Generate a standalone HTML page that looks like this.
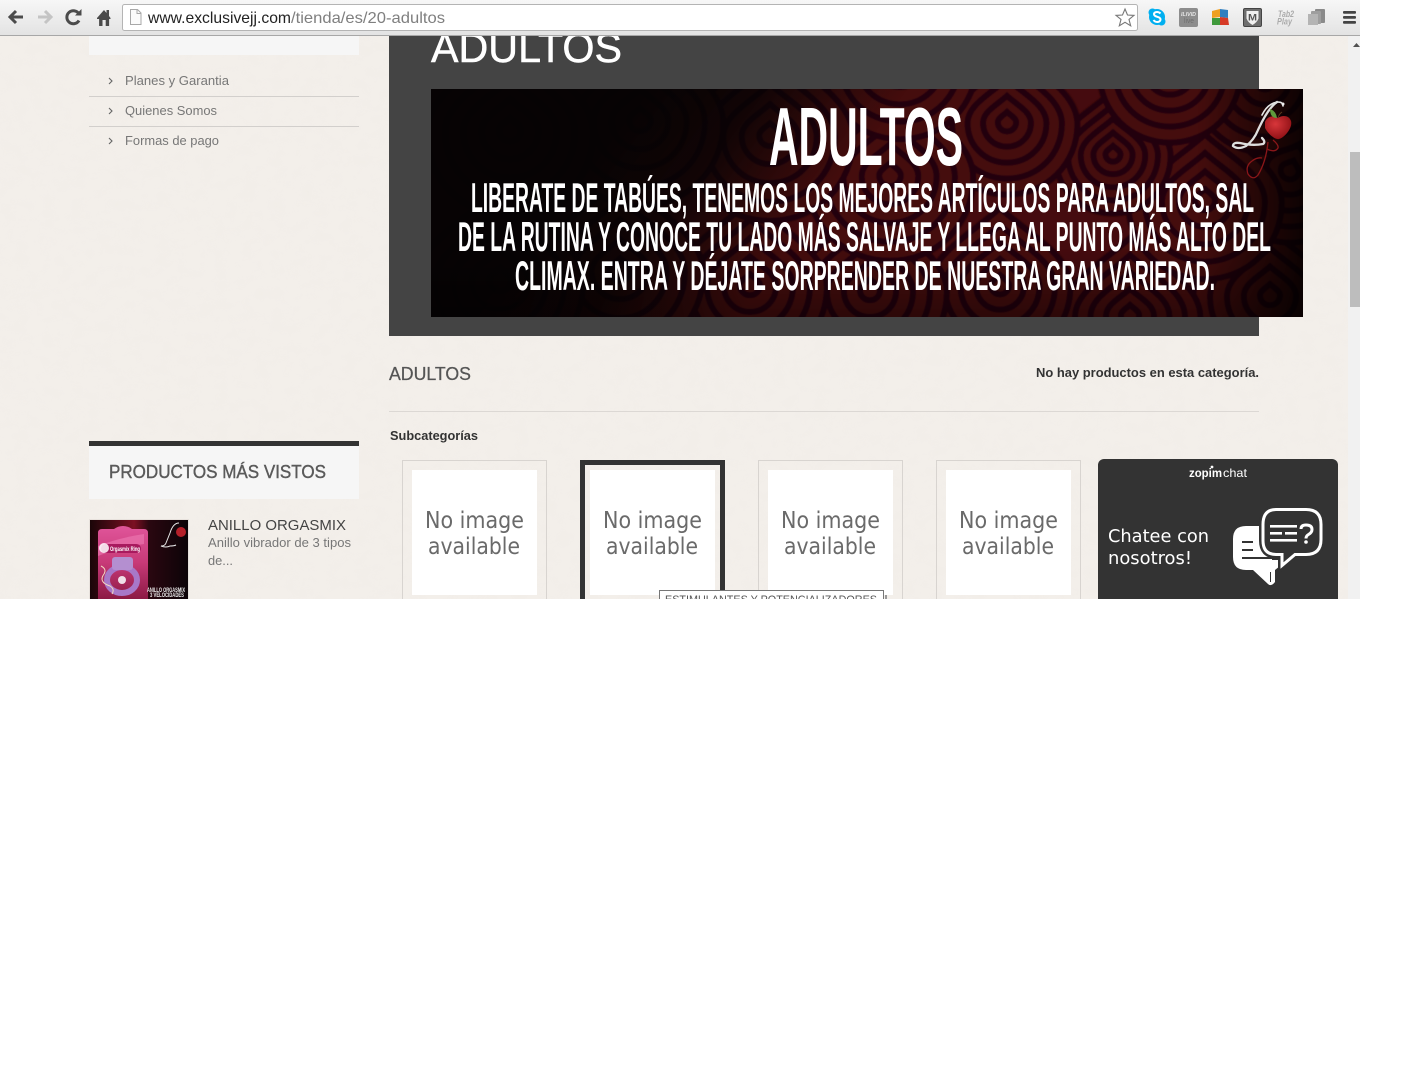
<!DOCTYPE html>
<html lang="es">
<head>
<meta charset="utf-8">
<title>Adultos</title>
<style>
html,body{margin:0;padding:0;background:#fff;width:1418px;height:1080px;overflow:hidden}
svg{display:block;position:absolute;left:0;top:0}
text{font-family:"Liberation Sans",Arial,sans-serif;white-space:pre}
.b{font-weight:bold;fill:#fff;font-family:"Liberation Sans Narrow","Liberation Sans",sans-serif}
.d{font-family:"DejaVu Sans",sans-serif}
</style>
</head>
<body>
<svg width="1418" height="1080" viewBox="0 0 1418 1080" xmlns="http://www.w3.org/2000/svg">
<defs>
<linearGradient id="tb" x1="0" y1="0" x2="0" y2="1"><stop offset="0" stop-color="#f7f7f7"/><stop offset="1" stop-color="#e3e3e3"/></linearGradient>
<filter id="paper" x="0" y="0" width="100%" height="100%"><feTurbulence type="fractalNoise" baseFrequency=".07 .09" numOctaves="3" seed="4"/><feColorMatrix values="0 0 0 0 .55 0 0 0 0 .5 0 0 0 0 .44 .5 0 0 0 -.2"/></filter>
<filter id="soft" x="-5%" y="-5%" width="110%" height="110%"><feGaussianBlur stdDeviation=".7"/></filter>
<linearGradient id="dk" gradientUnits="userSpaceOnUse" x1="590" y1="160" x2="760" y2="287"><stop offset="0" stop-color="#050304" stop-opacity=".97"/><stop offset=".45" stop-color="#050304" stop-opacity=".8"/><stop offset="1" stop-color="#050304" stop-opacity="0"/></linearGradient>
<linearGradient id="rt" x1="0" y1="0" x2="1" y2="0"><stop offset=".88" stop-color="#000" stop-opacity="0"/><stop offset="1" stop-color="#000" stop-opacity=".8"/></linearGradient>
<linearGradient id="bt" x1="0" y1="0" x2="0" y2="1"><stop offset=".7" stop-color="#000" stop-opacity="0"/><stop offset="1" stop-color="#000" stop-opacity=".35"/></linearGradient>
<clipPath id="bc"><rect x="431" y="89" width="872" height="228"/></clipPath>
<clipPath id="pc"><rect x="90" y="520" width="98" height="79"/></clipPath>
<radialGradient id="ap" cx=".4" cy=".35" r=".7"><stop offset="0" stop-color="#d8363a"/><stop offset="1" stop-color="#8c0f14"/></radialGradient>
<linearGradient id="pk" x1="0" y1="0" x2="0" y2="1"><stop offset="0" stop-color="#e0559a"/><stop offset=".5" stop-color="#c83a78"/><stop offset="1" stop-color="#8c1a44"/></linearGradient>
<linearGradient id="pr" x1="0" y1="0" x2="1" y2="0"><stop offset="0" stop-color="#1a0508"/><stop offset=".45" stop-color="#7c1023"/><stop offset=".6" stop-color="#2a0710"/><stop offset="1" stop-color="#0c0408"/></linearGradient>
<path id="td" vector-effect="non-scaling-stroke" d="M0-70C26-46 64-28 64 2 64 38 36 66 0 66-36 66-64 38-64 2-64-28-26-46 0-70Z"/>
<g id="sw" stroke="#230508" stroke-width="6" fill="none">
<use href="#td" fill="#450b0f"/>
<use href="#td" transform="scale(.78)"/>
<use href="#td" transform="scale(.56)"/>
<use href="#td" transform="scale(.34)"/>
<use href="#td" transform="scale(.13)"/>
</g>
</defs>

<!-- page background -->
<rect x="0" y="0" width="1348" height="599" fill="#f3efea"/>
<rect x="0" y="0" width="1348" height="599" filter="url(#paper)" opacity=".1"/>

<!-- left sidebar -->
<rect x="89" y="36" width="270" height="19" fill="#f6f6f6"/>
<g fill="none" stroke="#666" stroke-width="1.1"><path d="M109 78l3 3-3 3"/><path d="M109 108l3 3-3 3"/><path d="M109 138l3 3-3 3"/></g>
<text x="125" y="85" font-size="13" fill="#777" textLength="104" lengthAdjust="spacingAndGlyphs">Planes y Garantia</text>
<text x="125" y="115" font-size="13" fill="#777" textLength="92" lengthAdjust="spacingAndGlyphs">Quienes Somos</text>
<text x="125" y="145" font-size="13" fill="#777" textLength="94" lengthAdjust="spacingAndGlyphs">Formas de pago</text>
<rect x="89" y="96" width="270" height="1" fill="#d2cfcc"/>
<rect x="89" y="126" width="270" height="1" fill="#d2cfcc"/>

<rect x="89" y="441" width="270" height="5" fill="#333"/>
<rect x="89" y="446" width="270" height="53" fill="#f6f6f6"/>
<text x="109" y="478" font-size="18" fill="#5a5a5a" stroke="#5a5a5a" stroke-width=".4" textLength="217" lengthAdjust="spacingAndGlyphs">PRODUCTOS MÁS VISTOS</text>

<!-- product thumbnail -->
<rect x="89" y="519" width="100" height="80" fill="#e7e1dc"/>
<g clip-path="url(#pc)">
<rect x="90" y="520" width="98" height="79" fill="url(#pr)"/>
<path d="M98 533q0-4 4-4h12q4-3 9-3t9 3h12q4 0 4 4v66H98Z" fill="url(#pk)"/>
<path d="M98 546q20-8 46-12v10q-24 3-46 12Z" fill="#ee7cb4" opacity=".6"/>
<rect x="101" y="544" width="40" height="9" rx="4.500" fill="#a81a5e"/>
<circle cx="104" cy="548" r="5" fill="#fff" opacity=".85"/>
<text x="110" y="551" font-size="6" font-weight="bold" fill="#fff" textLength="30" lengthAdjust="spacingAndGlyphs">Orgasmix Ring</text>
<ellipse cx="122" cy="580" rx="15" ry="13" fill="none" stroke="#a878c8" stroke-width="6"/>
<rect x="112" y="557" width="21" height="13" rx="3" fill="#b48fd0"/>
<circle cx="122" cy="580" r="4" fill="#f0e0e8"/>
<path d="M101 566q6 3 3 8-6 8 6 12 5 3 2 8" fill="none" stroke="#f3d9c0" stroke-width="1"/>
<text x="147" y="592" font-size="6" font-weight="bold" fill="#eee" textLength="38" lengthAdjust="spacingAndGlyphs">ANILLO ORGASMIX</text>
<text x="150" y="597" font-size="6" font-weight="bold" fill="#eee" textLength="34" lengthAdjust="spacingAndGlyphs">3 VELOCIDADES</text>
<path d="M179 523q-6 0-9 10l-4 10q-1 3-5 3 5 2 9 0 4 0 6-1" fill="none" stroke="#e8e8e8" stroke-width="1"/>
<circle cx="181" cy="532" r="5" fill="#b5202a"/>
</g>
<text x="208" y="530" font-size="15" fill="#444" textLength="138" lengthAdjust="spacingAndGlyphs">ANILLO ORGASMIX</text>
<text x="208" y="547" font-size="13" fill="#777" textLength="143" lengthAdjust="spacingAndGlyphs">Anillo vibrador de 3 tipos</text>
<text x="208" y="565" font-size="13" fill="#777" textLength="25" lengthAdjust="spacingAndGlyphs">de...</text>

<!-- dark panel -->
<rect x="389" y="30" width="870" height="306" fill="#444"/>
<text x="431" y="62" font-size="42" fill="#fff" stroke="#fff" stroke-width=".5" textLength="191" lengthAdjust="spacingAndGlyphs">ADULTOS</text>

<!-- banner -->
<g clip-path="url(#bc)">
<rect x="431" y="89" width="872" height="228" fill="#450b0f"/>
<g filter="url(#soft)">
<use href="#sw" transform="translate(1270 295) scale(1.2)"/>
<use href="#sw" transform="translate(1130 315) scale(1.1)"/>
<use href="#sw" transform="translate(1000 285) scale(1.1)"/>
<use href="#sw" transform="translate(870 290) scale(1.2)"/>
<use href="#sw" transform="translate(750 285) scale(1.2)"/>
<use href="#sw" transform="translate(620 270) scale(1.3)"/>
<use href="#sw" transform="translate(500 280) scale(1.3)"/>
<use href="#sw" transform="translate(1290 170) scale(1.1) rotate(20)"/>
<use href="#sw" transform="translate(1205 200) scale(1.2)"/>
<use href="#sw" transform="translate(1113 154) scale(.9)"/>
<use href="#sw" transform="translate(1265 80) scale(1.1)"/>
<use href="#sw" transform="translate(1170 70) scale(1.1)"/>
<use href="#sw" transform="translate(1007 122) scale(1.1)"/>
<use href="#sw" transform="translate(890 175) scale(1.3)"/>
<use href="#sw" transform="translate(900 60) scale(1.2)"/>
<use href="#sw" transform="translate(770 135) scale(1.3)"/>
<use href="#sw" transform="translate(640 120) scale(1.3)"/>
<use href="#sw" transform="translate(510 130) scale(1.3)"/>
</g>
<rect x="431" y="89" width="872" height="228" fill="url(#dk)"/>
<rect x="431" y="89" width="872" height="228" fill="url(#rt)"/>
<rect x="431" y="89" width="872" height="228" fill="url(#bt)"/>
<!-- logo -->
<path d="M1273 140q6 5 5 8-3 5-11 1" fill="none" stroke="#8a1619" stroke-width="1.300"/>
<path d="M1268 142q-2 20-10 33-5 6-10-1-3-8 4-13 5-4 10-3" fill="none" stroke="#8a1619" stroke-width="1.300"/>
<path d="M1262 115Q1268 103 1278 102q5 0 5 4" fill="none" stroke="#e6e6e6" stroke-width="1.600" stroke-linecap="round"/>
<path d="M1277 102Q1268 108 1258 130q-4 10-12 16-8 4-13 0 0-4 7-3 12 3 23 1 3-2-1-6" fill="none" stroke="#dedede" stroke-width="2.300" stroke-linecap="round"/>
<circle cx="1283" cy="104" r="1.500" fill="#eee"/>
<path d="M1265 122C1267 116 1274 115 1278 118 1282 115 1289 115 1291 121 1293 128 1284 138 1279 139 1275 140 1268 134 1265 128Z" fill="url(#ap)"/>
<path d="M1270 109q6 2 7 9-7 0-7-9Z" fill="#5f9a3c"/>
<path d="M1278 118q1-4 4-6" stroke="#5c3a20" stroke-width="1" fill="none"/>
<!-- banner text -->
<text class="b" x="769" y="165" font-size="83" textLength="194" lengthAdjust="spacingAndGlyphs">ADULTOS</text>
<text class="b" x="471" y="212" font-size="42" textLength="783" lengthAdjust="spacingAndGlyphs">LIBERATE DE TABÚES, TENEMOS LOS MEJORES ARTÍCULOS PARA ADULTOS, SAL</text>
<text class="b" x="458" y="251" font-size="42" textLength="813" lengthAdjust="spacingAndGlyphs">DE LA RUTINA Y CONOCE TU LADO MÁS SALVAJE Y LLEGA AL PUNTO MÁS ALTO DEL</text>
<text class="b" x="515" y="290" font-size="42" textLength="700" lengthAdjust="spacingAndGlyphs">CLIMAX. ENTRA Y DÉJATE SORPRENDER DE NUESTRA GRAN VARIEDAD.</text>
</g>

<!-- headings -->
<text x="389" y="380" font-size="18" fill="#555" stroke="#555" stroke-width=".25" textLength="82" lengthAdjust="spacingAndGlyphs">ADULTOS</text>
<text x="1036" y="377" font-size="13" font-weight="bold" fill="#333" textLength="223" lengthAdjust="spacingAndGlyphs">No hay productos en esta categoría.</text>
<rect x="389" y="411" width="870" height="1" fill="#dcd8d4"/>
<text x="390" y="440" font-size="13" font-weight="bold" fill="#333" textLength="88" lengthAdjust="spacingAndGlyphs">Subcategorías</text>

<!-- cards -->
<g fill="none" stroke="#d8d4d0">
<rect x="402.500" y="460.500" width="144" height="150"/>
<rect x="758.500" y="460.500" width="144" height="150"/>
<rect x="936.500" y="460.500" width="144" height="150"/>
</g>
<rect x="582.500" y="462.500" width="140" height="150" fill="none" stroke="#333" stroke-width="5"/>
<g fill="#fff">
<rect x="412" y="470" width="125" height="125"/>
<rect x="590" y="470" width="125" height="125"/>
<rect x="768" y="470" width="125" height="125"/>
<rect x="946" y="470" width="125" height="125"/>
</g>
<g font-size="23" fill="#6a6a6a" class="d">
<text class="d" x="425" y="528" textLength="99" lengthAdjust="spacingAndGlyphs">No image</text>
<text class="d" x="428" y="554" textLength="92" lengthAdjust="spacingAndGlyphs">available</text>
<text class="d" x="603" y="528" textLength="99" lengthAdjust="spacingAndGlyphs">No image</text>
<text class="d" x="606" y="554" textLength="92" lengthAdjust="spacingAndGlyphs">available</text>
<text class="d" x="781" y="528" textLength="99" lengthAdjust="spacingAndGlyphs">No image</text>
<text class="d" x="784" y="554" textLength="92" lengthAdjust="spacingAndGlyphs">available</text>
<text class="d" x="959" y="528" textLength="99" lengthAdjust="spacingAndGlyphs">No image</text>
<text class="d" x="962" y="554" textLength="92" lengthAdjust="spacingAndGlyphs">available</text>
</g>

<!-- tooltip -->
<rect x="885" y="595" width="2" height="4" fill="#999"/>
<rect x="659.500" y="590.500" width="224" height="20" fill="#fff" stroke="#767676"/>
<text x="665" y="603" font-size="11" fill="#555" textLength="212" lengthAdjust="spacingAndGlyphs">ESTIMULANTES Y POTENCIALIZADORES</text>

<!-- chat widget -->
<rect x="1098" y="459" width="240" height="160" rx="6" fill="#333"/>
<text x="1189" y="477" font-size="12" font-weight="bold" fill="#fff" textLength="33" lengthAdjust="spacingAndGlyphs">zopim</text>
<text x="1223" y="477" font-size="12" fill="#fff" textLength="24" lengthAdjust="spacingAndGlyphs">chat</text>
<circle cx="1212" cy="467" r="1.400" fill="#fff"/>
<text class="d" x="1108" y="542" font-size="18" fill="#fff" textLength="101" lengthAdjust="spacingAndGlyphs">Chatee con</text>
<text class="d" x="1108" y="564" font-size="18" fill="#fff" textLength="84" lengthAdjust="spacingAndGlyphs">nosotros!</text>
<!-- back bubble -->
<path d="M1246 526H1272V560H1282L1280 566 1275 570V582Q1271 587 1268 584L1253 570H1246Q1233 570 1233 557V539Q1233 526 1246 526Z" fill="#fff"/>
<g fill="#333"><rect x="1242" y="541" width="11" height="2"/><rect x="1242" y="549" width="11" height="2"/><rect x="1242" y="557" width="33" height="2"/><rect x="1270" y="572" width="1" height="10"/></g>
<!-- front bubble -->
<path d="M1276 509.500h30q15 0 15 15v15q0 15-15 15h-11l-13 11v-11h-6q-13 0-13-14v-16q0-15 13-15Z" fill="#333" stroke="#333" stroke-width="8"/>
<path d="M1276 509.500h30q15 0 15 15v15q0 15-15 15h-11l-13 11v-11h-6q-13 0-13-14v-16q0-15 13-15Z" fill="#333" stroke="#fff" stroke-width="3"/>
<g fill="#fff"><rect x="1270" y="525" width="27" height="2.600"/><rect x="1270" y="532" width="12" height="2.600"/><rect x="1285" y="532" width="12" height="2.600"/><rect x="1270" y="539" width="27" height="2.600"/></g>
<path d="M1301 529q0-4 5-4 6 0 6 4.500 0 3-3.500 5-2.500 1.500-2.500 4" fill="none" stroke="#fff" stroke-width="3"/>
<circle cx="1306" cy="542" r="1.800" fill="#fff"/>

<!-- scrollbar -->
<rect x="1348" y="36" width="12" height="563" fill="#f1f1f1"/>
<rect x="1350" y="152" width="10" height="155" fill="#bdbdbd"/>
<path d="M1353 47l3.500-4 3.500 4Z" fill="#505050"/>

<!-- blank area below the captured viewport -->
<rect x="0" y="599" width="1418" height="481" fill="#fff"/>

<!-- toolbar -->
<rect x="0" y="0" width="1360" height="35" fill="url(#tb)"/>
<rect x="0" y="35" width="1360" height="1" fill="#a7a7a7"/>
<!-- back -->
<path d="M23 17H12M16 11l-6 6 6 6" fill="none" stroke="#4b4b4b" stroke-width="3"/>
<!-- forward -->
<path d="M38 17h11M45 11l6 6-6 6" fill="none" stroke="#c4c4c4" stroke-width="3"/>
<!-- reload -->
<path d="M79 14a6.500 6.500 0 1 0 0 6.500" fill="none" stroke="#4b4b4b" stroke-width="3"/>
<path d="M75 15.500h6.500V9Z" fill="#4b4b4b"/>
<!-- home -->
<path d="M97 18l7-8 2.500 3V10h2.500v6L110.500 18v1h-1.400v7h-3.400v-6h-3.200v6h-3.400v-7H97Z" fill="#4b4b4b"/>
<!-- address -->
<rect x="122.500" y="4.500" width="1015" height="26" rx="2" fill="#fff" stroke="#b4b4b4"/>
<path d="M130.500 9.500h7l3.500 3.500v11.500h-10.500Z" fill="#fbfbfb" stroke="#a8a8a8"/>
<path d="M137 9.500v4h4" fill="none" stroke="#a8a8a8"/>
<text x="148" y="23" font-size="16" fill="#222" textLength="143" lengthAdjust="spacingAndGlyphs">www.exclusivejj.com</text>
<text x="291" y="23" font-size="16" fill="#7f7f7f" textLength="154" lengthAdjust="spacingAndGlyphs">/tienda/es/20-adultos</text>
<!-- star -->
<path d="M1125 9l2.500 6 6.500.4-5 4.100 1.700 6.300-5.700-3.500-5.700 3.500 1.700-6.300-5-4.100 6.500-.4Z" fill="#fff" stroke="#777" stroke-width="1.100"/>
<!-- skype -->
<circle cx="1157" cy="17" r="8" fill="#00aff0"/><circle cx="1152.500" cy="12.500" r="4" fill="#00aff0"/><circle cx="1161.500" cy="21.500" r="4" fill="#00aff0"/>
<path d="M1160.500 13.500q-1.500-1.500-3.500-1.500-3 0-3 2.300c0 3 6.500 2 6.500 5 0 2.200-2 2.700-3.300 2.700q-2.400 0-3.700-2" fill="none" stroke="#fff" stroke-width="2"/>
<!-- ilivid -->
<rect x="1179" y="8" width="19" height="19" rx="2" fill="#8d8d8d"/>
<text x="1181" y="16" font-size="5.500" font-weight="bold" font-style="italic" fill="#e6e6e6" textLength="15" lengthAdjust="spacingAndGlyphs">ILIVID</text>
<text x="1184" y="23" font-size="7" fill="#6e6e6e" textLength="10" lengthAdjust="spacingAndGlyphs">live</text>
<!-- avg -->
<path d="M1212 11l8-2v8l-8 1Z" fill="#f0a020"/><path d="M1220 9l8 1v8l-8-1Z" fill="#2f7fc0"/><path d="M1212 18h8v7h-8Z" fill="#3f9a3c"/><path d="M1220 17l8 1 1 7h-9Z" fill="#d63a26"/>
<!-- malwarebytes -->
<rect x="1243.500" y="8.500" width="18" height="18" rx="1.500" fill="#6e6e6e" stroke="#444"/>
<path d="M1246.500 11h12v7.500q-1.500 4-6 6.500-4.500-2.500-6-6.500Z" fill="#f1f1f1"/>
<text x="1248" y="20.500" font-size="9" font-weight="bold" fill="#555" textLength="9" lengthAdjust="spacingAndGlyphs">M</text>
<!-- tab2play -->
<text x="1278" y="17" font-size="9" font-weight="bold" font-style="italic" fill="#aaa" textLength="16" lengthAdjust="spacingAndGlyphs">Tab2</text>
<text x="1277" y="24.500" font-size="9" font-weight="bold" font-style="italic" fill="#aaa" textLength="15" lengthAdjust="spacingAndGlyphs">Play</text>
<!-- stack -->
<rect x="1315" y="9" width="10" height="14" rx="1" fill="#8a8a8a"/>
<rect x="1311" y="11" width="10" height="13" rx="1" fill="#9e9e9e"/>
<rect x="1308" y="14" width="10" height="11" fill="#b4b4b4"/>
<!-- menu -->
<g fill="#444"><rect x="1343" y="11" width="13" height="2.800" rx="1"/><rect x="1343" y="16" width="13" height="2.800" rx="1"/><rect x="1343" y="21" width="13" height="2.800" rx="1"/></g>
</svg>
</body>
</html>
